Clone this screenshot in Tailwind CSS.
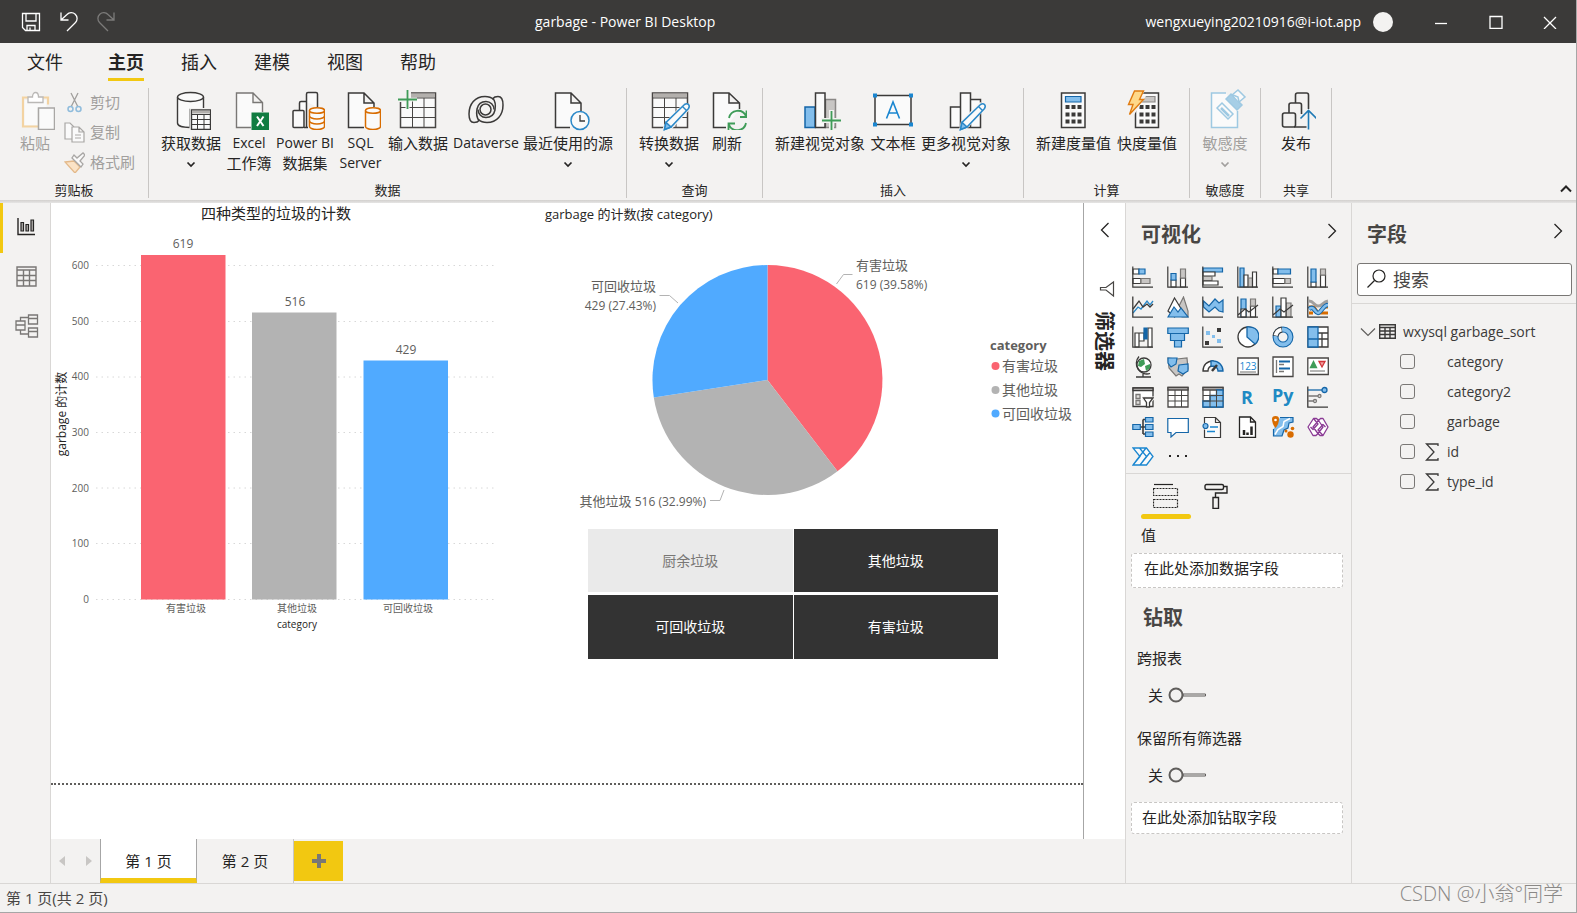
<!DOCTYPE html>
<html lang="zh-CN">
<head>
<meta charset="utf-8">
<title>garbage - Power BI Desktop</title>
<script src="https://cdn.jsdelivr.net/npm/@tailwindcss/browser@4"></script>
</head>
<body class="flex h-screen flex-col overflow-hidden border-r border-b border-[#a6a6a6] bg-[#f3f2f1] font-['Open_Sans','Noto_Sans_CJK_SC',sans-serif] text-sm text-[#252423]">

<!-- Title bar -->
<header class="flex h-[43px] shrink-0 items-center bg-[#3b3a39] text-white">
  <div class="flex w-[535px] items-center gap-[18px] pl-[21px]">
    <button aria-label="保存"><svg class="size-5" viewBox="0 0 20 20" fill="none" stroke="#fff" stroke-width="1.3"><path d="M1.500 1.500h17v17h-14l-3-3zM5 1.500v7.500h10v-7.500M6 18.500v-5h8v5M9 18.500v-3"/></svg></button>
    <button aria-label="撤消"><svg class="size-5" viewBox="0 0 20 20" fill="none" stroke="#fff" stroke-width="1.3"><path d="M2 .500v7.500h7.500M2 8l6-5.500a5.700 5.700 0 0 1 8.500 8l-8.500 8.500"/></svg></button>
    <button aria-label="恢复"><svg class="size-5" viewBox="0 0 20 20" fill="none" stroke="#7c7b7a" stroke-width="1.3"><path d="M17 .500v7.500h-7.500M17 8l-6-5.500a5.700 5.700 0 0 0-8.500 8l8.500 8.500"/></svg></button>
  </div>
  <h1>garbage - Power BI Desktop</h1>
  <div class="ml-auto flex items-center">
    <span>wengxueying20210916@i-iot.app</span>
    <span class="ml-3 size-5 rounded-full bg-[#f3f2f1]"></span>
    <button aria-label="最小化" class="ml-5 flex h-[43px] w-[55px] items-center justify-center"><svg class="size-[14px]" viewBox="0 0 14 14" stroke="#fff" stroke-width="1.3"><path d="M1 8.500h12"/></svg></button>
    <button aria-label="最大化" class="flex h-[43px] w-[55px] items-center justify-center"><svg class="size-[14px]" viewBox="0 0 14 14" fill="none" stroke="#fff" stroke-width="1.3"><path d="M1 1.500h12v12h-12z"/></svg></button>
    <button aria-label="关闭" class="flex h-[43px] w-[53px] items-center justify-center"><svg class="size-[14px]" viewBox="0 0 14 14" stroke="#fff" stroke-width="1.3"><path d="M1 2l12 12M13 2l-12 12"/></svg></button>
  </div>
</header>

<!-- Ribbon tabs -->
<nav class="flex h-[45px] shrink-0 gap-[37px] pt-1 pl-[27px] text-lg leading-[30px]">
  <button class="mr-2 h-[34px] pb-1">文件</button>
  <button class="h-[34px] border-b-3 border-[#f2c811] pb-px font-bold">主页</button>
  <button class="h-[34px] pb-1">插入</button>
  <button class="h-[34px] pb-1">建模</button>
  <button class="h-[34px] pb-1">视图</button>
  <button class="h-[34px] pb-1">帮助</button>
</nav>

<!-- Ribbon -->
<div class="flex h-[112px] shrink-0 text-[15px] leading-5">
  <section class="flex h-[110px] w-[149px] flex-col border-r border-[#c8c6c4] pl-[14px] text-[#a19f9d]">
    <div class="flex flex-1">
      <button class="flex w-[42px] flex-col items-center gap-[3px] pt-[2px]">
        <svg class="size-10" viewBox="0 0 40 40" fill="none"><path d="M13 7.500H8v29H23M28 7.500h5v7" stroke="#f3d3a2" stroke-width="2.200"/><path d="M9.500 10v25h13V18h9v-8z" fill="#fafafa"/><path d="M13 12.500V7h4.500c0-6 6-6 6 0H28v5.500z" fill="#fff" stroke="#bab8b6" stroke-width="1.300"/><path d="M23.500 18h16v21.500h-16z" fill="#fafafa" stroke="#a9a7a5" stroke-width="1.500"/></svg>
        <span>粘贴</span>
      </button>
      <div class="flex flex-col pl-2">
        <button class="flex h-[30px] items-center gap-[5px] pb-[2px]"><svg class="size-[21px]" viewBox="0 0 21 21" fill="none" stroke="#a19f9d" stroke-width="1.300"><path d="M7 1l7 14M14 1L7 15"/><circle cx="6.500" cy="17" r="2.500" stroke="#8fbcdc" stroke-width="1.500"/><circle cx="14.500" cy="17" r="2.500" stroke="#8fbcdc" stroke-width="1.500"/></svg>剪切</button>
        <button class="flex h-[30px] items-center gap-[5px] pb-[2px]"><svg class="size-[21px]" viewBox="0 0 21 21" fill="#fafafa" stroke="#a9a7a5" stroke-width="1.200"><path d="M8 17H1V1h5l4 4"/><path d="M8 5h7l5 5v10H8zM15 5v5h5M11 13h6M11 16h6"/></svg>复制</button>
        <button class="flex h-[30px] items-center gap-[5px] pb-[2px]"><svg class="size-[21px]" viewBox="0 0 21 21" fill="none" stroke="#a9a7a5" stroke-width="1.300"><path d="M1 10l9-1 6 6-5 6z" fill="#fbe3c6" stroke="#e3b98a"/><path d="M8 6l9 9 2-3-3-3 5-6-2-2-6 5-3-3z" fill="#fafafa"/></svg>格式刷</button>
      </div>
    </div>
    <h2 class="pr-[14px] pb-px text-center text-[13px] leading-[14px] text-[#252423]">剪贴板</h2>
  </section>

  <section class="flex h-[110px] w-[478px] flex-col border-r border-[#c8c6c4] px-[9px]">
    <div class="flex flex-1 items-start text-sm leading-5">
      <button class="flex w-[66px] flex-col items-center pt-[2px] text-[15px]">
        <svg class="mb-[3px] size-10" viewBox="0 0 40 40" fill="#fafafa" stroke="#3b3a39" stroke-width="1.400"><path d="M6.500 7v26c0 3 6 4.500 12.500 4.500V19.500h13.500V7"/><ellipse cx="19.500" cy="7" rx="13" ry="4.500"/><path d="M18.500 18h22v22h-22z" fill="#f3f2f1" stroke="none"/><path d="M20.500 20h19v19.500h-19z"/><path d="M21 20.500h18v3H21z" fill="#b3b0ad" stroke="none"/><path d="M20.500 24.500h19M20.500 29.500h19M20.500 34.500h19M26.500 24v15.500M33 24v15.500" stroke-width="1"/></svg>
        <span class="whitespace-nowrap">获取数据</span>
        <svg class="mt-2 h-2 w-3" viewBox="0 0 12 8" fill="none" stroke="#252423" stroke-width="1.700"><path d="M2.500 1.500L6 5l3.500-3.500"/></svg>
      </button>
      <button class="flex w-[50px] flex-col items-center pt-[2px]">
        <svg class="mb-[3px] size-10" viewBox="0 0 40 40" fill="#fafafa" stroke="#797775" stroke-width="1.400"><path d="M22 37.500H7.500V3H24l9.500 9.500V22M24 3v9.500h9.500"/><path d="M22.500 22.500h17.500V40H22.500z" fill="#107c41" stroke="none"/><path d="M28 26.500l6.500 9.500M34.500 26.500L28 36" stroke="#fff" stroke-width="2"/></svg>
        <span>Excel</span><span class="text-[15px]">工作簿</span>
      </button>
      <button class="flex w-[62px] flex-col items-center pt-[2px]">
        <svg class="mb-[3px] size-10" viewBox="0 0 40 40" fill="#fafafa" stroke="#3b3a39" stroke-width="1.500"><path d="M21.500 12V4q0-1.500 1.500-1.500h8q1.500 0 1.500 1.500v13M14.500 20v-7q0-1.500 1.500-1.500h5.500V37.500M19 37.500h4"/><rect x="8" y="20.500" width="11" height="17" rx="1"/><path d="M24.500 20.500v16c0 1.500 3 3 7.500 3s7.500-1.500 7.500-3v-16" stroke="#d86c00"/><path d="M24.500 26c0 1.500 3 3 7.500 3s7.500-1.500 7.500-3M24.500 31c0 1.500 3 3 7.500 3s7.500-1.500 7.500-3" fill="none" stroke="#d86c00"/><ellipse cx="32" cy="20.500" rx="7.500" ry="2.800" stroke="#d86c00"/></svg>
        <span class="whitespace-nowrap">Power BI</span><span class="text-[15px]">数据集</span>
      </button>
      <button class="flex w-[49px] flex-col items-center pt-[2px]">
        <svg class="mb-[3px] size-10" viewBox="0 0 40 40" fill="#fafafa" stroke="#3b3a39" stroke-width="1.500"><path d="M23 37.500H7.500V3H23l10 10v4M23 3v10h10"/><path d="M24.500 20.500v16c0 1.500 3 3 7.500 3s7.500-1.500 7.500-3v-16" stroke="#d86c00"/><ellipse cx="32" cy="20.500" rx="7.500" ry="2.800" stroke="#d86c00"/></svg>
        <span>SQL</span><span>Server</span>
      </button>
      <button class="flex w-[66px] flex-col items-center pt-[2px] text-[15px]">
        <svg class="mb-[3px] size-10" viewBox="0 0 40 40" fill="#fafafa" stroke="#484644" stroke-width="1.500"><path d="M2.500 3h35v34.500h-35z"/><path d="M3 3.500h34v4H3z" fill="#b3b0ad" stroke="none"/><path d="M2.500 8h35M2.500 17.500h35M2.500 27.500h35M14.500 8v29.500M26 8v29.500" stroke-width="1"/><path d="M0 0h13v12H0z" fill="#f3f2f1" stroke="none"/><path d="M9.500 0v19M0 9.500h19" stroke="#f3f2f1" stroke-width="4"/><path d="M9.500 0v19M0 9.500h19" stroke="#3f9c58" stroke-width="1.800"/></svg>
        <span class="whitespace-nowrap">输入数据</span>
      </button>
      <button class="flex w-[70px] flex-col items-center pt-[2px]">
        <svg class="mb-[3px] size-10" viewBox="0 0 40 40" fill="none" stroke="#3b3a39" stroke-width="1.500"><path id="swirl" d="M27.500 9.500C25 7 22 6.500 19 6.500C9 6.500 3 14 3 24C3 29 4 32.500 8 32.500C10 32.500 12 32 13 30.500C10 27 10.500 22 11 19C12 14.500 15.500 11.500 20 11.500A8 8 0 0 1 28 19.500"/><use href="#swirl" transform="rotate(180 20 19.500)"/><circle cx="19.500" cy="19.500" r="5.500"/></svg>
        <span>Dataverse</span>
      </button>
      <button class="flex w-[94px] flex-col items-center pt-[2px] text-[15px]">
        <svg class="mb-[3px] size-10 overflow-visible" viewBox="0 0 40 40" fill="#fafafa" stroke="#3b3a39" stroke-width="1.500"><path d="M22 37.500H7.500V3H23l10 10v8M23 3v10h10"/><circle cx="32" cy="30.500" r="9" stroke="#2a88c8"/><path d="M32 25v6h5" fill="none" stroke-width="1.300"/></svg>
        <span class="whitespace-nowrap">最近使用的源</span>
        <svg class="mt-2 h-2 w-3" viewBox="0 0 12 8" fill="none" stroke="#252423" stroke-width="1.700"><path d="M2.500 1.500L6 5l3.500-3.500"/></svg>
      </button>
    </div>
    <h2 class="pb-px text-center text-[13px] leading-[14px]">数据</h2>
  </section>

  <section class="flex h-[110px] w-[136px] flex-col border-r border-[#c8c6c4] px-[9px]">
    <div class="flex flex-1 items-start">
      <button class="flex w-[66px] flex-col items-center pt-[2px]">
        <svg class="mb-[3px] size-10 overflow-visible" viewBox="0 0 40 40" fill="#fafafa" stroke="#484644" stroke-width="1.500"><path d="M3.500 3h35v34.500h-35z"/><path d="M4 3.500h34v4H4z" fill="#b3b0ad" stroke="none"/><path d="M3.500 8h35M3.500 17.500h35M3.500 27.500h35M15.500 8v29.500M27 8v29.500" stroke-width="1"/><path d="M13 40l4-9L36 12l7 5-20 22v3z" fill="#f3f2f1" stroke="none"/><path d="M15.500 39.500l1.500-7L35.500 14.500q2.500-1.500 4 0t0 4L22 37z" stroke="#2a88c8"/><path d="M15.500 39.500l1.500-7 5 4.500z" fill="#83beec" stroke="#2a88c8"/><path d="M33.500 16.500l4 4" stroke="#2a88c8"/></svg>
        <span class="whitespace-nowrap">转换数据</span>
        <svg class="mt-2 h-2 w-3" viewBox="0 0 12 8" fill="none" stroke="#252423" stroke-width="1.700"><path d="M2.500 1.500L6 5l3.500-3.500"/></svg>
      </button>
      <button class="flex w-[50px] flex-col items-center pt-[2px]">
        <svg class="mb-[3px] size-10" viewBox="0 0 40 40" fill="#fafafa" stroke="#3b3a39" stroke-width="1.500"><path d="M19 37.500H6.500V3H22l10.500 10v6M22 3v10h10.500"/><g fill="none" stroke="#3f9c58" stroke-width="1.800"><path d="M22 28a9 9 0 0 1 17-2M39.500 20.500V27H33M39 33a9 9 0 0 1-17 2M21.500 40v-6.500H28"/></g></svg>
        <span>刷新</span>
      </button>
    </div>
    <h2 class="pb-px text-center text-[13px] leading-[14px]">查询</h2>
  </section>

  <section class="flex h-[110px] w-[261px] flex-col border-r border-[#c8c6c4] px-[9px]">
    <div class="flex flex-1 items-start">
      <button class="flex w-[96px] flex-col items-center pt-[2px]">
        <svg class="mb-[3px] size-10 overflow-visible" viewBox="0 0 40 40" fill="#fafafa" stroke="#3b3a39" stroke-width="1.500"><path d="M25.500 9.500h10v28h-10z" fill="#c8c6c4" stroke="#8a8886"/><path d="M5 17h10v20.500H5z" fill="#83beec" stroke="#1566a8"/><path d="M15.500 3h9.500v34.500h-9.500z"/><path d="M31.500 20v21M21 30.500h21" stroke="#f3f2f1" stroke-width="5"/><path d="M31.500 21v19M22 30.500h19" stroke="#3f9c58" stroke-width="1.800"/></svg>
        <span class="whitespace-nowrap">新建视觉对象</span>
      </button>
      <button class="flex w-[50px] flex-col items-center pt-[2px]">
        <svg class="mb-[3px] size-10" viewBox="0 0 40 40" fill="#fafafa" stroke="#3b3a39" stroke-width="1.500"><path d="M2 5.500h36v29H2z"/><path d="M0 3.500h4v4H0zM36 3.500h4v4h-4zM0 32.500h4v4H0zM36 32.500h4v4h-4z" fill="#1a86d0" stroke="none"/><path d="M13.500 28.500L20 12l6.500 16.500M15.500 23h9" fill="none" stroke="#1a86d0" stroke-width="1.600"/></svg>
        <span>文本框</span>
      </button>
      <button class="flex w-[96px] flex-col items-center pt-[2px]">
        <svg class="mb-[3px] size-10 overflow-visible" viewBox="0 0 40 40" fill="#fafafa" stroke="#3b3a39" stroke-width="1.500"><path d="M24.500 9.500h10v28h-10zM4.500 17h10v20.500h-10zM14.500 3h10v34.500h-10z"/><path d="M13 40l2-9L34 12l7 5-20 22v3z" fill="#f3f2f1" stroke="none"/><path d="M14.500 39.500l1.500-7L34.500 14.500q2.500-1.500 4 0t0 4L21 37z" stroke="#2a88c8"/><path d="M14.500 39.500l1.500-7 5 4.500z" fill="#83beec" stroke="#2a88c8"/><path d="M32.500 16.500l4 4" stroke="#2a88c8"/></svg>
        <span class="whitespace-nowrap">更多视觉对象</span>
        <svg class="mt-2 h-2 w-3" viewBox="0 0 12 8" fill="none" stroke="#252423" stroke-width="1.700"><path d="M2.500 1.500L6 5l3.500-3.500"/></svg>
      </button>
    </div>
    <h2 class="pb-px text-center text-[13px] leading-[14px]">插入</h2>
  </section>

  <section class="flex h-[110px] w-[166px] flex-col border-r border-[#c8c6c4] px-[9px]">
    <div class="flex flex-1 items-start">
      <button class="flex w-[81px] flex-col items-center pt-[2px]">
        <svg class="mb-[3px] size-10" viewBox="0 0 40 40" fill="#fafafa" stroke="#3b3a39" stroke-width="1.500"><path d="M7.500 3h23.500v34.500H7.500z"/><path d="M11.500 6.500h15.500v5.500H11.500z" fill="#83beec" stroke="#1566a8" stroke-width="1.200"/><path d="M11.500 17h16M11.500 24.500h16M11.500 31.500h16" stroke-width="4" stroke-dasharray="4 2"/></svg>
        <span class="whitespace-nowrap">新建度量值</span>
      </button>
      <button class="flex w-[66px] flex-col items-center pt-[2px]">
        <svg class="mb-[3px] size-10" viewBox="0 0 40 40" fill="#fafafa" stroke="#3b3a39" stroke-width="1.500"><path d="M8.500 3h23v34.500h-23z"/><path d="M15 6.500h13v5.500H15z" fill="#c8c6c4" stroke="#8a8886" stroke-width="1.200"/><path d="M12.500 17h16M12.500 24.500h16M12.500 31.500h16" stroke-width="4" stroke-dasharray="4 2"/><path d="M5 0h13l-3 6h4L5 28H0z" fill="#f3f2f1" stroke="none"/><path d="M7.500 1h9l-4 8.500h4L2.500 24.500 6 14.500H1.500z" fill="#ffd98a" stroke="#e07b10" stroke-width="1.400"/></svg>
        <span class="whitespace-nowrap">快度量值</span>
      </button>
    </div>
    <h2 class="pb-px text-center text-[13px] leading-[14px]">计算</h2>
  </section>

  <section class="flex h-[110px] w-[71px] flex-col border-r border-[#c8c6c4]">
    <div class="flex flex-1 items-start justify-center text-[#a19f9d]">
      <button class="flex w-[51px] flex-col items-center pt-[2px]">
        <svg class="mb-[3px] size-10 overflow-visible" viewBox="0 0 40 40" fill="#fafafa" stroke="#9ec9e2" stroke-width="1.500"><path d="M21 3H6.500v34.500h26V21"/><path d="M12 18l5-5 11 11-5 5z"/><path d="M16 18l8 8" stroke-width="2.500"/><path d="M27 5l6-5 7 7-6 5z"/><path d="M21 9l5-5 11 11-5 5z" fill="#a6cee6"/><path d="M28 5l5 2 1 5" /></svg>
        <span class="whitespace-nowrap">敏感度</span>
        <svg class="mt-2 h-2 w-3" viewBox="0 0 12 8" fill="none" stroke="#a19f9d" stroke-width="1.700"><path d="M2.500 1.500L6 5l3.500-3.500"/></svg>
      </button>
    </div>
    <h2 class="pb-px text-center text-[13px] leading-[14px]">敏感度</h2>
  </section>

  <section class="flex h-[110px] w-[71px] flex-col border-r border-[#c8c6c4]">
    <div class="flex flex-1 items-start justify-center">
      <button class="flex w-[51px] flex-col items-center pt-[2px]">
        <svg class="mb-[3px] size-10" viewBox="0 0 40 40" fill="none" stroke="#3b3a39" stroke-width="1.600"><path d="M19.500 13V5q0-2 2-2h9q2 0 2 2v14M13 23V15q0-2 2-2h8.500q2 0 2 2v9M18 37h12.500"/><rect x="6.500" y="23" width="13" height="14" rx="2"/><path d="M32.500 39.500V21M24.500 28.500l8-8 8 8" stroke="#1f7ab5"/></svg>
        <span>发布</span>
      </button>
    </div>
    <h2 class="pb-px text-center text-[13px] leading-[14px]">共享</h2>
  </section>
  <button aria-label="折叠功能区" class="mt-auto mr-1 mb-[5px] ml-auto"><svg class="h-3 w-3" viewBox="0 0 12 12" fill="none" stroke="#252423" stroke-width="2"><path d="M1 8.500l5-5 5 5"/></svg></button>
</div>
<div class="h-[3px] shrink-0 bg-linear-to-b from-[#d2d0ce] to-[#e6e5e4]"></div>

<!-- Work area -->
<div class="flex min-h-0 flex-1">
  <nav class="flex w-[51px] shrink-0 flex-col border-r border-[#d9d7d5]">
    <button aria-label="报表" class="flex h-[50px] items-center border-l-3 border-[#f2c811] pb-[2px] pl-[13px]"><svg class="size-5" viewBox="0 0 20 20" fill="#b3b0ad" stroke="#252423" stroke-width="1.400"><path d="M2 1v16.500h17" fill="none"/><path d="M5 5.500h2.500v8.500H5zM10 7.500h2.500v6.500H10zM15 3h2.500v11H15z" stroke-width="1.200"/></svg></button>
    <button aria-label="数据" class="flex h-[50px] items-center pb-1 pl-4"><svg class="size-[21px]" viewBox="0 0 21 21" fill="none" stroke="#797775" stroke-width="1.400"><path d="M1 1h19v19H1z"/><path d="M1 4h19M1 9.500h19M1 14.500h19M7.500 4v16M13.500 4v16"/></svg></button>
    <button aria-label="模型" class="flex h-[50px] items-center pb-1 pl-[15px]"><svg class="size-6" viewBox="0 0 24 24" fill="none" stroke="#797775" stroke-width="1.300"><path d="M1 7h9v9H1zM1 11h9M13.500 1h9v9h-9zM13.500 4.500h9M13.500 14h9v9h-9zM13.500 17.500h9M5.500 7V3.500h8M5.500 16v4h8"/></svg></button>
  </nav>

  <div class="flex min-w-0 flex-1 flex-col">
    <div class="flex min-h-0 flex-1">
      <!-- Report canvas -->
      <main class="min-w-0 flex-1 bg-white">
        <div class="flex h-[582px] items-start border-b-2 border-dotted border-[#605e5c]">
          <svg class="block min-w-0 flex-[475]" viewBox="51 203 475 440" fill="#605e5c" role="img" aria-label="四种类型的垃圾的计数">
            <text x="276" y="219" text-anchor="middle" class="text-[15px]" fill="#252423">四种类型的垃圾的计数</text>
            <path d="M96 265.500h400M96 321.500h400M96 377h400M96 432.500h400M96 488h400M96 543.500h400M96 599.500h400" stroke="#d8d8d8" stroke-width="1" stroke-dasharray="1.500 4"/>
            <path d="M141 255h84.500v344.500H141z" fill="#fa6471"/>
            <path d="M252 312.500h84.500v287H252z" fill="#b3b3b3"/>
            <path d="M363.500 360.500h84.500v239h-84.500z" fill="#50aaff"/>
            <g text-anchor="middle" class="text-xs"><text x="183" y="248">619</text><text x="295" y="306">516</text><text x="406" y="354">429</text></g>
            <g text-anchor="end" class="text-[10px]"><text x="89" y="269">600</text><text x="89" y="325">500</text><text x="89" y="380">400</text><text x="89" y="436">300</text><text x="89" y="492">200</text><text x="89" y="547">100</text><text x="89" y="603">0</text></g>
            <g text-anchor="middle" class="text-[10px]"><text x="186" y="612">有害垃圾</text><text x="297" y="612">其他垃圾</text><text x="408" y="612">可回收垃圾</text></g>
            <text x="297" y="628" text-anchor="middle" class="text-[10px]" fill="#252423">category</text>
            <text transform="translate(66 414) rotate(-90)" text-anchor="middle" class="text-xs" fill="#252423">garbage 的计数</text>
          </svg>
          <div class="flex min-w-0 flex-[557] flex-col">
            <svg class="block w-full" viewBox="526 203 557 323" fill="#605e5c" role="img" aria-label="garbage 的计数(按 category)">
              <text x="545" y="219" class="text-[13px]" fill="#252423">garbage 的计数(按 category)</text>
              <path d="M767.500 380V265A115 115 0 0 1 837.500 471.200z" fill="#fa6471"/>
              <path d="M767.500 380L837.500 471.200A115 115 0 0 1 653.800 397.500z" fill="#b3b3b3"/>
              <path d="M767.500 380L653.800 397.500A115 115 0 0 1 767.500 265z" fill="#50aaff"/>
              <path d="M836.500 284l7-9.500h9M659.500 295.500h10l8.500 7.500M710 500.500h10l4-10.500" fill="none" stroke="#b3b3b3"/>
              <g class="text-[13px]"><text x="856" y="270">有害垃圾</text><text x="656" y="291" text-anchor="end">可回收垃圾</text></g>
              <g class="text-xs"><text x="856" y="289">619 (39.58%)</text><text x="656" y="310" text-anchor="end">429 (27.43%)</text><text x="706" y="506" text-anchor="end"><tspan class="text-[13px]">其他垃圾</tspan> 516 (32.99%)</text></g>
              <text x="990" y="350" class="text-[13px] font-bold">category</text>
              <circle cx="995.500" cy="366" r="4" fill="#fa6471"/><circle cx="995.500" cy="390" r="4" fill="#b3b3b3"/><circle cx="995.500" cy="413.500" r="4" fill="#50aaff"/>
              <g class="text-sm"><text x="1002" y="371">有害垃圾</text><text x="1002" y="395">其他垃圾</text><text x="1002" y="419">可回收垃圾</text></g>
            </svg>
            <div class="mt-[3px] mr-[85px] ml-[62px] grid grid-cols-2 gap-x-px gap-y-[3px] text-sm text-white">
              <button class="h-[63px] bg-[#eaeaea] text-[#797775]">厨余垃圾</button>
              <button class="h-[63px] bg-[#333]">其他垃圾</button>
              <button class="h-[64px] bg-[#333]">可回收垃圾</button>
              <button class="h-[64px] bg-[#333]">有害垃圾</button>
            </div>
          </div>
        </div>
      </main>
      <!-- Collapsed filter pane -->
      <aside class="flex w-[42px] shrink-0 flex-col items-center border-l border-[#a6a6a6] bg-white">
        <button aria-label="展开筛选器" class="mt-[19px]"><svg class="h-4 w-3" viewBox="0 0 12 16" fill="none" stroke="#252423" stroke-width="1.300"><path d="M9.500 1L2.500 8l7 7"/></svg></button>
        <svg class="mt-[42px] ml-1 h-[18px] w-4" viewBox="0 0 16 18" fill="none" stroke="#484644" stroke-width="1.200"><path d="M14.500 2v14L7 10H1.500V7.500H7z"/></svg>
        <h2 class="mt-[13px] mr-px text-xl leading-5 font-bold [writing-mode:vertical-rl] [text-orientation:sideways]">筛选器</h2>
      </aside>
    </div>
    <!-- Page tabs -->
    <div class="flex h-[44px] shrink-0 items-stretch text-[15px]">
      <button aria-label="上一页" class="flex w-[21px] items-center justify-center"><svg class="h-3 w-2" viewBox="0 0 8 12" fill="#c8c6c4"><path d="M7 1v10L1 6z"/></svg></button>
      <button aria-label="下一页" class="ml-[6px] flex w-[22px] items-center justify-center"><svg class="h-3 w-2" viewBox="0 0 8 12" fill="#c8c6c4"><path d="M1 1v10l6-5z"/></svg></button>
      <button class="w-[97px] border-x border-b-5 border-x-[#a6a6a6] border-b-[#f2c811] bg-white pt-[6px]">第 1 页</button>
      <button class="w-[97px] border-r border-[#c8c6c4] pt-px">第 2 页</button>
      <button aria-label="新建页" class="my-[2px] flex w-[49px] items-center justify-center bg-[#f2c811]"><svg class="size-4" viewBox="0 0 16 16" stroke="#797775" stroke-width="4"><path d="M8 1v14M1 8h14"/></svg></button>
    </div>
  </div>

  <!-- Visualizations pane -->
  <aside class="flex w-[226px] shrink-0 flex-col border-l border-[#d9d7d5]">
    <div class="flex h-[63px] items-center justify-between pr-[13px] pl-[15px]">
      <h2 class="text-xl leading-6 font-bold text-[#484644]">可视化</h2>
      <button aria-label="折叠" class="mb-2"><svg class="h-4 w-3" viewBox="0 0 12 16" fill="none" stroke="#252423" stroke-width="1.300"><path d="M2.500 1l7 7-7 7"/></svg></button>
    </div>
    <div class="grid h-[208px] auto-rows-[30px] grid-cols-[repeat(6,35px)] border-b border-[#d9d7d5] pl-[6px] text-[#3b3a39] *:size-[22px]">
      <!-- bar and column variants -->
      <svg viewBox="0 0 22 22" fill="#fff" stroke="#3b3a39" stroke-width="1.200"><path d="M1 3h6v5H1z"/><path d="M7 3h6v5H7z" fill="#83beec" stroke="#1566a8"/><path d="M1 12.500h8v5H1z"/><path d="M9 12.500h9v5H9z" fill="#c8c6c4" stroke="#797775"/><path d="M.800.500v20.700H21" fill="none"/></svg>
      <svg viewBox="0 0 22 22" fill="#fff" stroke="#3b3a39" stroke-width="1.200"><path d="M4 14h5v7H4z"/><path d="M4 7.500h5V14H4z" fill="#83beec" stroke="#1566a8"/><path d="M13.500 12h5v9h-5z"/><path d="M13.500 3h5v9h-5z" fill="#c8c6c4" stroke="#797775"/><path d="M.800.500v20.700H21" fill="none"/></svg>
      <svg viewBox="0 0 22 22" fill="#fff" stroke="#3b3a39" stroke-width="1.200"><path d="M1 2h19.500v4H1z" fill="#83beec" stroke="#1566a8"/><path d="M1 6h12v4H1z"/><path d="M1 10.500h9v4H1z" fill="#c8c6c4" stroke="#797775"/><path d="M1 15h15v4H1z"/><path d="M.800.500v20.700H21" fill="none"/></svg>
      <svg viewBox="0 0 22 22" fill="#fff" stroke="#3b3a39" stroke-width="1.200"><path d="M3 2h4v19H3z" fill="#83beec" stroke="#1566a8"/><path d="M7 9h4v12H7z"/><path d="M11.500 12h4v9h-4z" fill="#c8c6c4" stroke="#797775"/><path d="M15.500 6h4v15h-4z"/><path d="M.800.500v20.700H21" fill="none"/></svg>
      <svg viewBox="0 0 22 22" fill="#fff" stroke="#3b3a39" stroke-width="1.200"><path d="M1 3h5v5H1z"/><path d="M6 3h12.500v5H6z" fill="#83beec" stroke="#1566a8"/><path d="M1 12.500h12v5H1z"/><path d="M13 12.500h5.500v5H13z" fill="#c8c6c4" stroke="#797775"/><path d="M.800.500v20.700H21" fill="none"/></svg>
      <svg viewBox="0 0 22 22" fill="#fff" stroke="#3b3a39" stroke-width="1.200"><path d="M4 16h5v5H4z"/><path d="M4 3h5v13H4z" fill="#83beec" stroke="#1566a8"/><path d="M13.500 9h5v12h-5z"/><path d="M13.500 3h5v6h-5z" fill="#c8c6c4" stroke="#797775"/><path d="M.800.500v20.700H21" fill="none"/></svg>
      <!-- line, area, combo, ribbon -->
      <svg viewBox="0 0 22 22" fill="none" stroke="#3b3a39" stroke-width="1.300"><path d="M1 17l5-6 3 2 6-8 3 4 3-4" stroke="#2a88c8"/><path d="M1 13l6-8 4 6 4-3 3 3 3-3"/><path d="M.800.500v20.700H21"/></svg>
      <svg viewBox="0 0 22 22" fill="#fff" stroke="#3b3a39" stroke-width="1.200"><path d="M11 12l5.500-11L21 15v6h-6z" fill="#c8c6c4" stroke="#797775"/><path d="M1 15L7.500 2l8 13-8 6z"/><path d="M1 21l6-10 4 5 3-4 7 9z" fill="#83beec" stroke="#1566a8"/></svg>
      <svg viewBox="0 0 22 22" fill="none" stroke="#3b3a39" stroke-width="1.200"><path d="M1.500 5L7 10l6-7 4 4 4-3v12l-4-1-4-4-6 5-5.500-5z" fill="#83beec" stroke="#1566a8"/><path d="M.800.500v20.700H21"/></svg>
      <svg viewBox="0 0 22 22" fill="#fff" stroke="#3b3a39" stroke-width="1.200"><path d="M4 3h5v18H4z" fill="#83beec" stroke="#1566a8"/><path d="M4 13h5v8H4zM13.500 10h5v11h-5z"/><path d="M13.500 3h5v7h-5z" fill="#c8c6c4" stroke="#797775"/><path d="M1 19l7-6 4 3 9-7M.800.500v20.700H21" fill="none"/></svg>
      <svg viewBox="0 0 22 22" fill="#fff" stroke="#3b3a39" stroke-width="1.200"><path d="M4 10h5v11H4z" fill="#83beec" stroke="#1566a8"/><path d="M14 7h5v14h-5z" fill="#c8c6c4" stroke="#797775"/><path d="M9 2h5v19H9z"/><path d="M1 19l7-6 4 3 9-7M.800.500v20.700H21" fill="none"/></svg>
      <svg viewBox="0 0 22 22" fill="none"><path d="M2 5c5 0 5 5 9 5s5-4 10-5" stroke="#a19f9d" stroke-width="3"/><path d="M2 11h4c3 0 3 6 6 6h9M2 17h4M16 11h5" stroke="#d86c00" stroke-width="3"/><path d="M2 13c5-4 6 4 9 4s5-8 10-8" stroke="#1566a8" stroke-width="4.500"/><path d="M2 13c5-4 6 4 9 4s5-8 10-8" stroke="#83beec" stroke-width="2.500"/><path d="M.800.500v20.700H21" stroke="#3b3a39" stroke-width="1.300"/></svg>
      <!-- waterfall, funnel, scatter, pie, donut, treemap -->
      <svg viewBox="0 0 22 22" fill="#fff" stroke="#3b3a39" stroke-width="1.200"><path d="M3 7h4v14H3zM7 7h5v8H7zM16 2h4v19h-4z"/><path d="M12 2h3v11h-3z" fill="#1566a8" stroke="#1566a8"/><path d="M.800.500v20.700H21" fill="none"/></svg>
      <svg viewBox="0 0 22 22" fill="#83beec" stroke="#1566a8" stroke-width="1.200"><path d="M.800 2h20.500v5.500H.800zM3.500 7.500h14v7h-14zM7.500 14.500h7v6.500h-7z"/></svg>
      <svg viewBox="0 0 22 22" fill="#3b3a39"><path d="M3 15h4v4H3zM15 2h4v4h-4z"/><path d="M4 5h4v4H4zM10 9h3v3h-3zM15 13h4v4h-4z" fill="#83beec"/><path d="M.800.500v20.700H21" fill="none" stroke="#3b3a39" stroke-width="1.200"/></svg>
      <svg viewBox="0 0 22 22" fill="#fff" stroke="#3b3a39" stroke-width="1.300"><circle cx="11" cy="11" r="10"/><path d="M10 11V1c14-1 14 13 8 17z" fill="#83beec" stroke="#1566a8"/></svg>
      <svg viewBox="0 0 22 22" fill="none"><circle cx="11" cy="11" r="7.500" stroke="#1566a8" stroke-width="6"/><circle cx="11" cy="11" r="7.500" stroke="#83beec" stroke-width="3.800"/><path d="M3.500 10a7.500 7.500 0 0 1 6.500-6.500" stroke="#3b3a39" stroke-width="6"/><path d="M3.600 9.500a7.500 7.500 0 0 1 5.900-5.900" stroke="#fff" stroke-width="4"/></svg>
      <svg viewBox="0 0 22 22" fill="#fff" stroke="#3b3a39" stroke-width="1.300"><path d="M1 1h20v20H1zM11 7h10M11 13h10M15 7v14"/><path d="M1 1h10v12H1zM1 13h10v8H1z" fill="#83beec" stroke="#1566a8"/></svg>
      <!-- map, filled map, gauge, card, multi-row card, KPI -->
      <svg viewBox="0 0 22 22" fill="none" stroke="#3b3a39" stroke-width="1.300"><circle cx="12" cy="9" r="7" fill="#fff"/><path d="M7 5l5-2 1 5-4 3-3-1zM13 10l5-2v4l-4 3z" fill="#3f9c58" stroke="none"/><path d="M7 .500a10.500 10.500 0 0 0 11 17M11 18v2.500M4 21h15"/></svg>
      <svg viewBox="0 0 22 22" fill="#c8c6c4" stroke="#797775" stroke-width="1.200"><path d="M1 2l9 1 10-1 1 11-6 7-3-2-3 2-7-8z"/><path d="M1 2h9l-1 6-5 3-3-4zM12 9l9-1v7l-5 3-5-3z" fill="#83beec" stroke="#1566a8"/></svg>
      <svg viewBox="0 0 22 22" fill="#fff" stroke="#3b3a39" stroke-width="1.300"><path d="M1 15C1 9 5 5 11 5v5c-3 0-5 2-5 5z"/><path d="M9 5c8-1 12 5 12 10h-5c0-3-2-5-7-5z" fill="#83beec" stroke="#1566a8"/><path d="M10 15l5-6" stroke-width="2.500"/></svg>
      <svg viewBox="0 0 22 22" fill="#fff" stroke="#484644" stroke-width="1.300"><path d="M.800 2h20.500v16.500H.800z"/><text x="11" y="14" text-anchor="middle" class="text-[10px]" fill="#1a86d0" stroke="none">123</text><path d="M3 16h16" stroke-width=".800"/></svg>
      <svg viewBox="0 0 22 22" fill="#fff" stroke="#484644" stroke-width="1.300"><path d="M1 1h20v19.500H1z"/><path d="M4.500 4v13M7 8.500h5M7 15.500h5" stroke="#797775"/><path d="M7 5.500h11M7 12.500h11" stroke="#1566a8" stroke-width="2"/></svg>
      <svg viewBox="0 0 22 22" fill="#fff" stroke="#484644" stroke-width="1.300"><path d="M.800 2h20.500v16.500H.800z"/><path d="M3.500 11.500l3-6 3 6z" fill="#3f9c58" stroke="#3f9c58"/><path d="M12 5.500h6l-3 5.500z" fill="#f2a0a0" stroke="#d13438"/><path d="M3 15h15" stroke-width=".800"/></svg>
      <!-- slicer, table, matrix, R, Python, key influencers -->
      <svg viewBox="0 0 22 22" fill="#fff" stroke="#3b3a39" stroke-width="1.300"><path d="M1 2h20v18.500H1z"/><path d="M1 2h20v2.500H1z" fill="#c8c6c4"/><path d="M4 8.500h4v4H4zM4 14.500h4v4H4z" fill="#e1dfdd" stroke="#797775"/><path d="M10 10.500h12v3l-4 4V22h-4v-4.500l-4-4z" fill="#f3f2f1" stroke="none"/><path d="M11.500 12h9.500l-3.500 4.500V21h-3v-4.500z"/></svg>
      <svg viewBox="0 0 22 22" fill="#fff" stroke="#484644" stroke-width="1.300"><path d="M1 1.500h20v19.500H1z"/><path d="M1 1.500h20V4H1z" fill="#c8c6c4"/><path d="M1 9.500h20M1 15h20M8 4v17M14.500 4v17" stroke-width="1"/></svg>
      <svg viewBox="0 0 22 22" fill="#fff" stroke="#484644" stroke-width="1.300"><path d="M1 1.500h20v19.500H1z"/><path d="M1 1.500h20V4H1z" fill="#c8c6c4"/><path d="M14.500 4H21v17H1v-6h7V9.500h6.500z" fill="#83beec" stroke="#1566a8"/><path d="M1 9.500h20M1 15h20M8 4v17M14.500 4v17" stroke-width="1"/></svg>
      <svg viewBox="0 0 22 22" class="overflow-visible"><text x="4" y="18" class="text-lg font-bold" fill="#1f8ac4">R</text></svg>
      <svg viewBox="0 0 22 22" class="overflow-visible"><text x="0" y="16" class="text-lg font-bold" fill="#1f8ac4">Py</text></svg>
      <svg viewBox="0 0 22 22" fill="none" stroke="#3b3a39" stroke-width="1.300"><path d="M.800.500v20.700H21"/><path d="M1 4h14" stroke="#1566a8"/><circle cx="17.500" cy="4" r="2.500" fill="#83beec" stroke="#1566a8"/><path d="M1 10h10M1 15h5" stroke="#797775"/><circle cx="12.500" cy="10" r="1.500" stroke="#797775"/><circle cx="8" cy="15" r="1.500" stroke="#797775"/></svg>
      <!-- decomposition tree, Q&A, narrative, paginated, ArcGIS, Power Apps -->
      <svg viewBox="0 0 22 22" fill="#83beec" stroke="#1566a8" stroke-width="1.200"><path d="M8 11h6M11 3.500h3M11 18h3M11 3.500V18" stroke="#3b3a39" stroke-width="1.600"/><path d="M.800 8.500h7.500v5H.800zM13.500 1.500H21v4.500h-7.500zM13.500 8.500H21v5h-7.500zM13.500 16H21v4.500h-7.500z"/></svg>
      <svg viewBox="0 0 22 22" fill="#fff" stroke="#1566a8" stroke-width="1.200"><path d="M.800 2.500h20.500v14H9L4 21v-4.500H.800z"/></svg>
      <svg viewBox="0 0 22 22" fill="#fafafa" stroke="#3b3a39" stroke-width="1.200"><path d="M2.500 7V1.500h11l5 5V21.500h-16v-8M13.500 1.500v5h5"/><path d="M8 11h8M5 15.500h8" stroke="#1a86d0" stroke-width="1.500"/><circle cx="3.500" cy="10" r="2.500" fill="#83beec" stroke="#1566a8"/></svg>
      <svg viewBox="0 0 22 22" fill="#fff" stroke="#252423" stroke-width="1.300"><path d="M2.500 1h11l5 5v15.500h-16zM13.500 1v5h5"/><path d="M7 14v5M10.500 16.500V19M14.500 10.500V19" stroke-width="2.500"/></svg>
      <svg viewBox="0 0 22 22" fill="#83beec" stroke="#1566a8" stroke-width="1.200" class="overflow-visible"><path d="M8 1.500h13V6l-4 1-1 5-4 2-2 6H1.500V13"/><path d="M18 2.500l-6 3-1 5-5 3-3 5" stroke="#fff" fill="none" stroke-width="1.500"/><path d="M0 3q0-3 3.500-3T7 3q0 5-3.500 9Q0 8 0 3z" fill="#d86c00" stroke="none"/><circle cx="3.500" cy="4" r="1.300" fill="#fff" stroke="none"/><g fill="#d86c00" stroke="none"><circle cx="18.500" cy="18.500" r="3.200"/><circle cx="14" cy="15" r="1.500"/><circle cx="20.500" cy="12.500" r="1.800"/></g></svg>
      <svg viewBox="0 0 22 22" fill="none" stroke="#8a3a94" stroke-width="1.300" stroke-linejoin="round"><path d="M6.500 2.500h3l2 2 2-2h2.500L21 11l-5 8.500h-3l-2-2-2 2H6L1 11z" fill="#fff"/><path d="M6.500 2.500L11 8 6 13.500 3.500 11M16 19.500L11 14l5-5.500 2.500 2.500M11.500 4.500L6 11l5 6.500M11.500 4.500L16 11l-5 6.500"/></svg>
      <svg viewBox="0 0 22 22" fill="#fafafa" stroke="#1a86d0" stroke-width="1.300"><path d="M1 2h13.500L21 10.500 14.500 19H1l7-8.500zM7.500 2l7 8.500L8 19M1 19L14 2M8 19L18 6.500"/></svg>
      <svg viewBox="0 0 22 22" fill="#252423"><path d="M2 9h2v2H2zM10 9h2v2h-2zM18 9h2v2h-2z"/></svg>
    </div>
    <div class="flex pt-[9px] pl-[15px]">
      <button aria-label="字段" class="flex h-[36px] w-[50px] flex-col items-center justify-between"><svg class="h-[26px] w-[26px]" viewBox="0 0 26 26" fill="none" stroke="#252423" stroke-width="1.200"><path d="M1 1.500h19"/><path d="M.500 5.500h24v7H.500zM.500 16.500h24v8H.500z" stroke-dasharray="2 1"/></svg><span class="h-[5px] w-full rounded-full bg-[#f2c811]"></span></button>
      <button aria-label="格式" class="flex h-[36px] w-[50px] flex-col items-center"><svg class="h-[26px] w-[26px]" viewBox="0 0 26 26" fill="none" stroke="#252423" stroke-width="1.400"><rect x="2" y="1.500" width="18.500" height="5" rx="1.500"/><path d="M20.500 3.500h3.500v6.500H12.500v4M10 14.500h5.500v11H10z"/></svg></button>
    </div>
    <h3 class="mt-[6px] pl-[15px] text-[15px] leading-5">值</h3>
    <div class="mt-2 mr-[8px] ml-[5px] flex h-[35px] items-center rounded-[3px] border border-dashed border-[#c8c6c4] bg-white px-3 pb-1 text-[15px]">在此处添加数据字段</div>
    <h2 class="mt-[18px] pl-[17px] text-xl leading-6 font-bold text-[#484644]">钻取</h2>
    <p class="mt-[18px] pl-[11px] text-[15px] leading-5">跨报表</p>
    <label class="mt-[17px] flex items-center gap-[5px] pl-[22px] text-[15px] leading-5">关<input type="checkbox" role="switch" class="sr-only"><svg class="h-[16px] w-[40px]" viewBox="0 0 40 16" fill="#f3f2f1" stroke="#605e5c"><path d="M15 7h22.500v2H15z"/><circle cx="8" cy="8" r="6.500" stroke-width="2"/></svg></label>
    <p class="mt-[23px] pl-[11px] text-[15px] leading-5">保留所有筛选器</p>
    <label class="mt-[17px] flex items-center gap-[5px] pl-[22px] text-[15px] leading-5">关<input type="checkbox" role="switch" class="sr-only"><svg class="h-[16px] w-[40px]" viewBox="0 0 40 16" fill="#f3f2f1" stroke="#605e5c"><path d="M15 7h22.500v2H15z"/><circle cx="8" cy="8" r="6.500" stroke-width="2"/></svg></label>
    <div class="mt-[17px] mr-[8px] ml-[5px] flex h-[32px] items-center rounded-[3px] border border-dashed border-[#c8c6c4] bg-white px-[10px] text-[15px]">在此处添加钻取字段</div>
  </aside>

  <!-- Fields pane -->
  <aside class="flex w-[225px] shrink-0 flex-col border-l border-[#d9d7d5] text-[#3b3a39]">
    <div class="flex h-[60px] items-center justify-between pt-[3px] pr-3 pl-[15px]">
      <h2 class="text-xl leading-6 font-bold text-[#484644]">字段</h2>
      <button aria-label="折叠" class="mb-2"><svg class="h-4 w-3" viewBox="0 0 12 16" fill="none" stroke="#252423" stroke-width="1.300"><path d="M2.500 1l7 7-7 7"/></svg></button>
    </div>
    <div class="border-b border-[#d9d7d5] pr-1 pb-[7px] pl-[5px]">
      <label class="flex h-[33px] items-center gap-[7px] rounded-[3px] border border-[#797775] bg-white px-[9px]">
        <svg class="mb-[2px] size-[19px] shrink-0" viewBox="0 0 19 19" fill="none" stroke="#252423" stroke-width="1.200"><circle cx="12" cy="7" r="6"/><path d="M7.500 11.500L.500 18.500"/></svg>
        <input type="text" placeholder="搜索" aria-label="搜索" class="w-full min-w-0 bg-transparent text-lg leading-6 outline-none placeholder:text-[#484644]">
      </label>
    </div>
    <button class="mt-[13px] flex h-[30px] items-center pl-[8px] text-sm"><svg class="h-3 w-4" viewBox="0 0 16 12" fill="none" stroke="#605e5c" stroke-width="1.200"><path d="M1 2.500l7 7 7-7"/></svg><svg class="mb-px ml-[3px] h-[15px] w-[17px]" viewBox="0 0 17 15" fill="none" stroke="#3b3a39" stroke-width="1.400"><path d="M.700.700h15.600v13.600H.700zM.700 3.500h15.600M.700 7h15.600M.700 10.500h15.600M6 3v11.500M11 3v11.500"/></svg><span class="ml-[7px]">wxysql garbage_sort</span></button>
    <ul class="text-sm">
      <li><label class="flex h-[30px] items-center pl-[48px]"><input type="checkbox" class="mb-[2px] size-[15px] appearance-none rounded-[3px] border border-[#797775]"><span class="ml-[32px]">category</span></label></li>
      <li><label class="flex h-[30px] items-center pl-[48px]"><input type="checkbox" class="mb-[2px] size-[15px] appearance-none rounded-[3px] border border-[#797775]"><span class="ml-[32px]">category2</span></label></li>
      <li><label class="flex h-[30px] items-center pl-[48px]"><input type="checkbox" class="mb-[2px] size-[15px] appearance-none rounded-[3px] border border-[#797775]"><span class="ml-[32px]">garbage</span></label></li>
      <li><label class="flex h-[30px] items-center pl-[48px]"><input type="checkbox" class="mb-[2px] size-[15px] appearance-none rounded-[3px] border border-[#797775]"><svg class="ml-[10px] h-[18px] w-[14px]" viewBox="0 0 14 18" fill="none" stroke="#3b3a39" stroke-width="1.300"><path d="M13 3V1H1.500L9 9l-7.500 8H13v-2"/></svg><span class="ml-2">id</span></label></li>
      <li><label class="flex h-[30px] items-center pl-[48px]"><input type="checkbox" class="mb-[2px] size-[15px] appearance-none rounded-[3px] border border-[#797775]"><svg class="ml-[10px] h-[18px] w-[14px]" viewBox="0 0 14 18" fill="none" stroke="#3b3a39" stroke-width="1.300"><path d="M13 3V1H1.500L9 9l-7.500 8H13v-2"/></svg><span class="ml-2">type_id</span></label></li>
    </ul>
  </aside>
</div>

<!-- Status bar -->
<footer class="relative flex h-[29px] shrink-0 items-center border-t border-[#d9d7d5] pt-px pl-[6px] text-[15px] text-[#484644]">
  第 1 页(共 2 页)
  <span class="absolute right-[13px] bottom-1 text-xl leading-7 font-light text-[#8a8886]">CSDN @小翁°同学</span>
</footer>
</body>
</html>
